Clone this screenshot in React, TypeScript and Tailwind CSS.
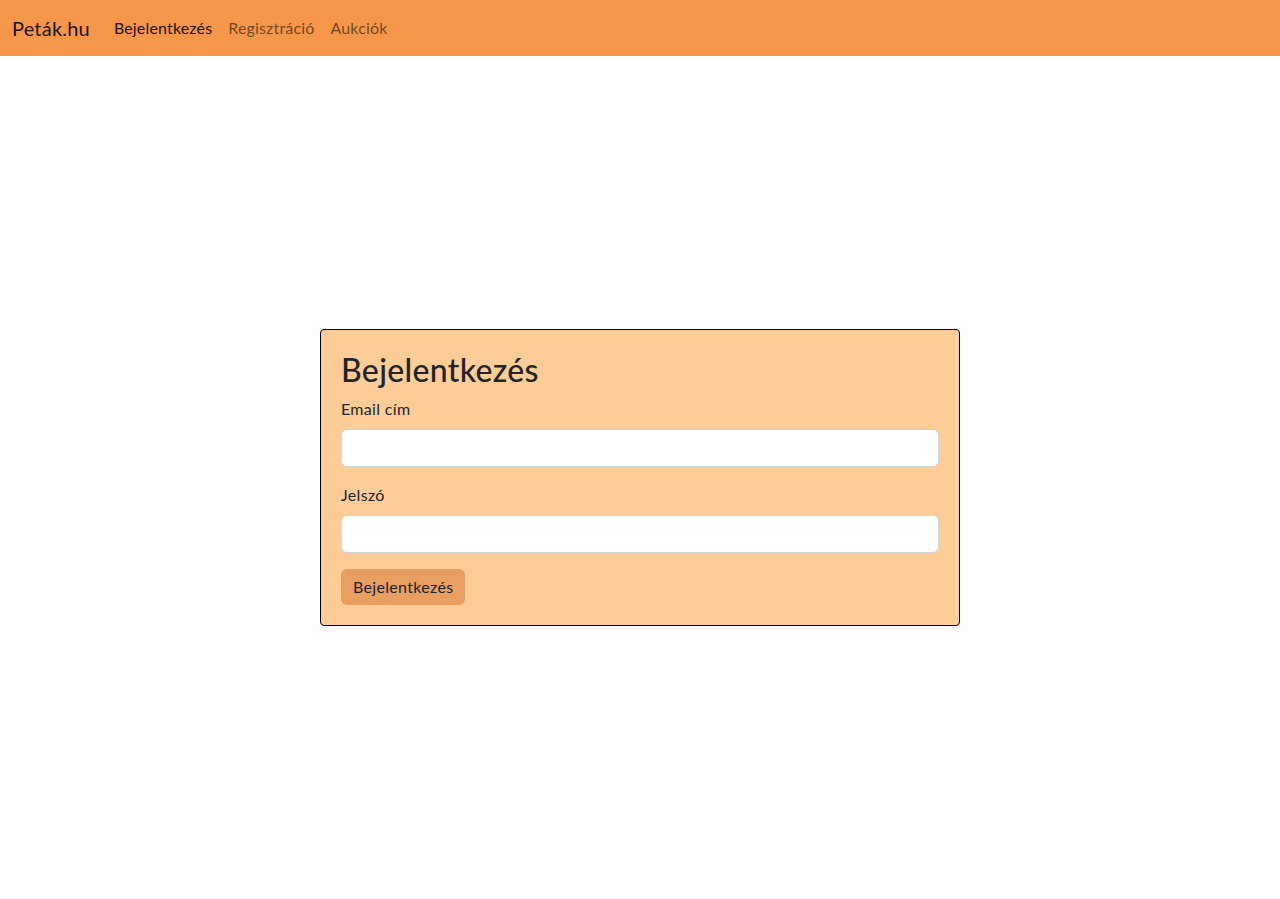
import React from 'react';

const NAV_LINKS = [
  { label: 'Bejelentkezés', active: true },
  { label: 'Regisztráció', active: false },
  { label: 'Aukciók', active: false },
];

const App: React.FC = () => {
  return (
    <div className="min-h-[899px] bg-white font-['Lato','Noto_Sans',sans-serif] tracking-[0.02em] text-[#212529]">
      {/* Navbar */}
      <nav className="h-14 bg-[#f59648] flex items-center px-3">
        <a className="text-[20px] text-black/90 mr-4 leading-[30px] tracking-[0.01em]">Peták.hu</a>
        <ul className="flex tracking-[0.01em]">
          {NAV_LINKS.map((l) => (
            <li key={l.label}>
              <a className={`block px-2 py-2 text-base leading-6 ${l.active ? 'text-black/90' : 'text-black/55'}`}>
                {l.label}
              </a>
            </li>
          ))}
        </ul>
      </nav>

      {/* Login card */}
      <main className="min-h-[843px] flex items-center justify-center">
        <div className="w-[640px] rounded border border-black bg-[#fecc96] p-5">
          <h1 className="text-[32px] leading-[39px] font-medium mb-2">Bejelentkezés</h1>
          <form onSubmit={(e) => e.preventDefault()}>
            <div className="mb-4">
              <label className="block text-base leading-6 mb-2">Email cím</label>
              <input
                type="email"
                className="block w-full h-[38px] rounded-md border border-[#ced4da] bg-white px-3 outline-none"
              />
            </div>
            <div className="mb-4">
              <label className="block text-base leading-6 mb-2">Jelszó</label>
              <input
                type="password"
                className="block w-full h-[38px] rounded-md border border-[#ced4da] bg-white px-3 outline-none"
              />
            </div>
            <button
              type="submit"
              className="h-9 rounded-md bg-[#e99e62] px-3 text-base leading-6 tracking-[0.02em] text-[#212529]"
            >
              Bejelentkezés
            </button>
          </form>
        </div>
      </main>
    </div>
  );
};

export default App;
